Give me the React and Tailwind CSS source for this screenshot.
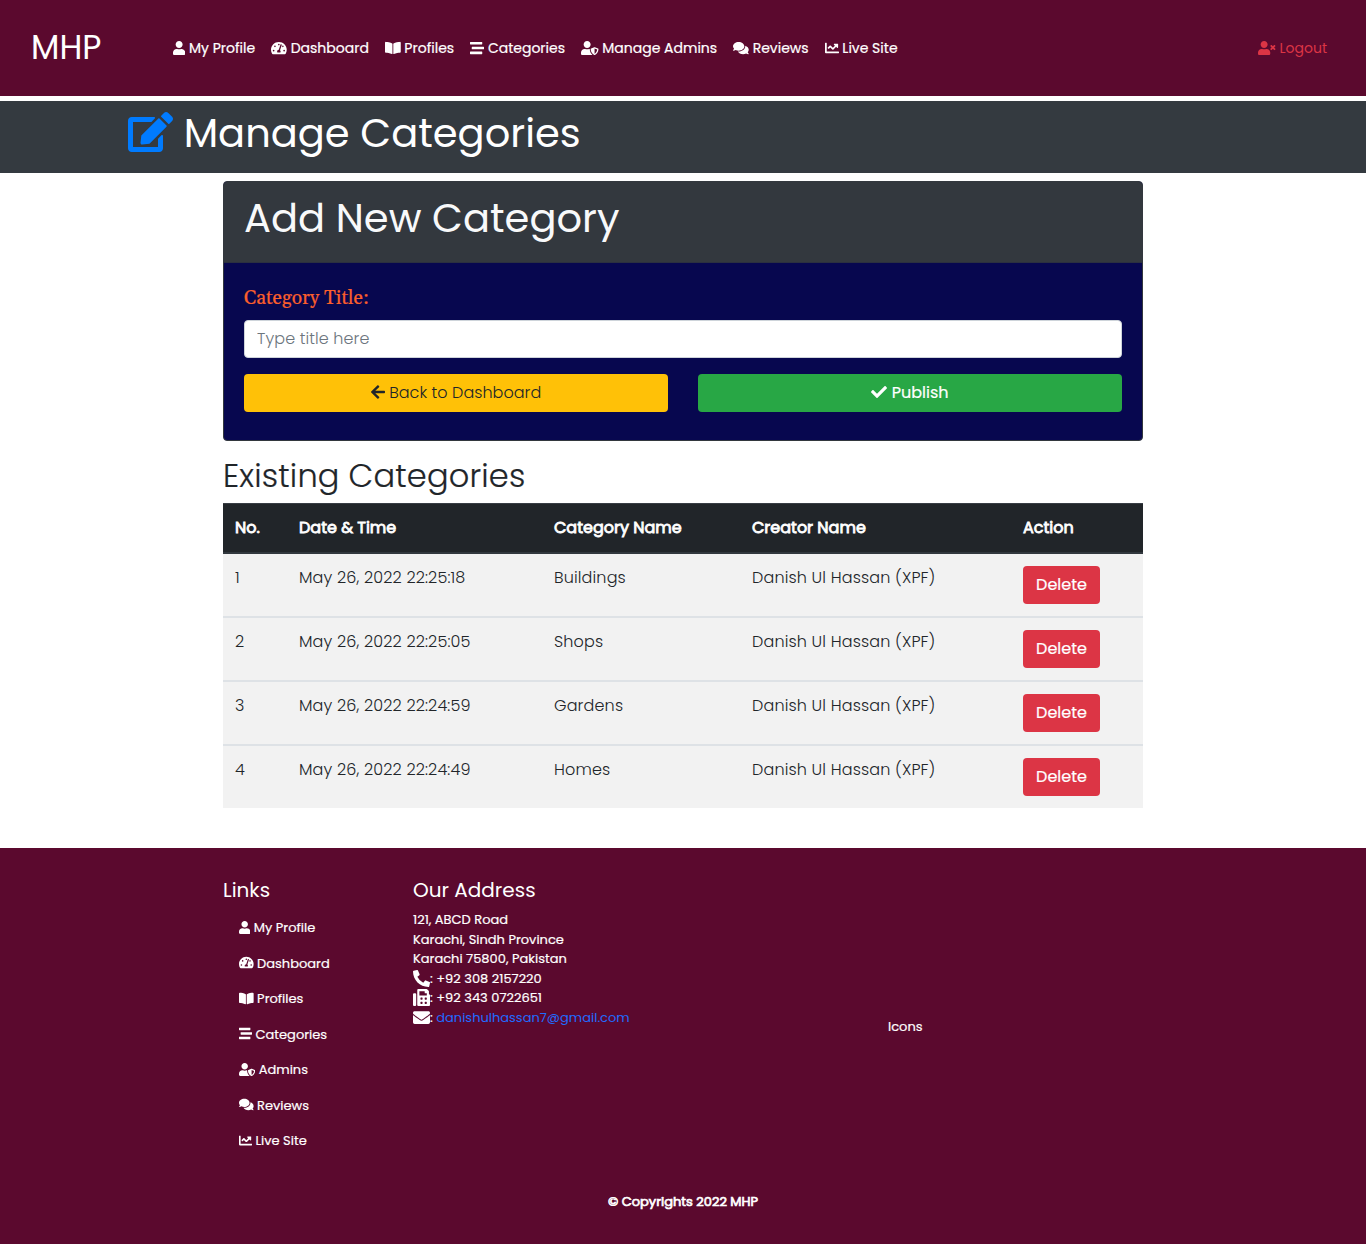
import { FaUser, FaTachometerAlt, FaBookOpen, FaStream, FaUserShield, FaComments, FaChartLine, FaUserTimes, FaEdit, FaArrowLeft, FaCheck, FaPhoneAlt, FaFax, FaEnvelope } from 'react-icons/fa';

const icon = 'inline-block h-[1em] align-[-0.125em]';

const links = [
  { label: 'My Profile', Icon: FaUser, width: 'w-[0.875em]' },
  { label: 'Dashboard', Icon: FaTachometerAlt, width: 'w-[1.125em]' },
  { label: 'Profiles', Icon: FaBookOpen, width: 'w-[1.125em]' },
  { label: 'Categories', Icon: FaStream, width: 'w-[1em]' },
  { label: 'Manage Admins', short: 'Admins', Icon: FaUserShield, width: 'w-[1.25em]' },
  { label: 'Reviews', Icon: FaComments, width: 'w-[1.125em]' },
  { label: 'Live Site', Icon: FaChartLine, width: 'w-[1em]' },
];

const rows = [
  ['1', 'May 26, 2022 22:25:18', 'Buildings', 'Danish Ul Hassan (XPF)'],
  ['2', 'May 26, 2022 22:25:05', 'Shops', 'Danish Ul Hassan (XPF)'],
  ['3', 'May 26, 2022 22:24:59', 'Gardens', 'Danish Ul Hassan (XPF)'],
  ['4', 'May 26, 2022 22:24:49', 'Homes', 'Danish Ul Hassan (XPF)'],
];

function Navbar() {
  return (
    <nav className="flex h-24 items-center bg-[#5b092e] pr-[39px] pl-[31px] text-sm text-white">
      <a className="w-[142px] text-[33px] leading-[48px]">MHP</a>
      <ul className="flex gap-4 [-webkit-text-stroke:0.2px_white]">
        {links.map(({ label, Icon, width }) => (
          <li key={label} className="whitespace-nowrap">
            <Icon className={`${icon} ${width}`} /> {label}
          </li>
        ))}
      </ul>
      <a className="ml-auto whitespace-nowrap text-[#dc3545]">
        <FaUserTimes className={`${icon} w-[1.25em]`} /> Logout
      </a>
    </nav>
  );
}

function CategoryForm() {
  return (
    <section className="overflow-hidden rounded border border-[#33383e] bg-[#07074f]">
      <header className="h-20 bg-[#33383e] px-5 pt-3 text-[#f8f9fa]">
        <h1 className="text-[40px] leading-[48px]">Add New Category</h1>
      </header>
      <div className="h-[178px] border-t border-[#2b3040] px-5 pt-[21px]">
        <label className="block h-[36px] font-['Gelasio','Source_Serif_4','Liberation_Serif',serif] text-[19.2px] leading-[30px] text-[#fb5f2c] [-webkit-text-stroke:0.2px]">Category Title:</label>
        <input
          className="block h-[38px] w-full rounded border border-[#ced4da] bg-white px-3 pb-[2px] text-base font-light tracking-[0.1px] placeholder:text-[#6c757d]"
          placeholder="Type title here"
        />
        <div className="mt-4 grid grid-cols-2 gap-[30px] text-base">
          <button className="h-[38px] rounded bg-[#ffc107] font-light tracking-[0.04px] text-[#212529]">
            <FaArrowLeft className={`${icon} w-[0.875em]`} /> Back to Dashboard
          </button>
          <button className="h-[38px] rounded bg-[#28a745] text-white [-webkit-text-stroke:0.2px_white]">
            <FaCheck className={`${icon} w-[1em]`} /> Publish
          </button>
        </div>
      </div>
    </section>
  );
}

function CategoryTable() {
  return (
    <table className="w-full table-fixed border-collapse text-base">
      <colgroup>
        <col className="w-16" />
        <col className="w-[255px]" />
        <col className="w-[198px]" />
        <col className="w-[271px]" />
        <col />
      </colgroup>
      <thead>
        <tr className="bg-[#212529] text-left text-white shadow-[inset_0_1px_0_#383d44,inset_0_-2px_0_#32383e]">
          {['No.', 'Date & Time', 'Category Name', 'Creator Name', 'Action'].map((h) => (
            <th key={h} className="px-3 pt-[13px] pb-[14px] leading-6 font-normal [-webkit-text-stroke:0.8px_white]">{h}</th>
          ))}
        </tr>
      </thead>
      <tbody>
        {rows.map((row, i) => (
          <tr key={row[0]} className={i < 3 ? 'h-16 bg-[#f2f2f2] shadow-[inset_0_-2px_0_#dee2e6]' : 'h-[62px] bg-[#f2f2f2]'}>
            {row.map((cell) => (
              <td key={cell} className="px-3 pt-3 align-top font-light tracking-[0.15px] text-[#212529]">{cell}</td>
            ))}
            <td className="px-3 pt-3 align-top">
              <button className="block h-[38px] w-[77px] rounded bg-[#dc3545] text-white [-webkit-text-stroke:0.2px_white]">Delete</button>
            </td>
          </tr>
        ))}
      </tbody>
    </table>
  );
}

function Footer() {
  return (
    <footer className="mt-10 h-[396px] bg-[#5b092e] text-[13px] text-white">
      <div className="mx-auto flex h-[344px] w-[920px] pt-[30px]">
        <div className="w-[190px]">
          <h5 className="text-xl leading-6">Links</h5>
          <ul className="mt-2 pl-4 [-webkit-text-stroke:0.2px_white]">
            {links.map(({ label, short, Icon, width }) => (
              <li key={label} className="h-[35.5px] pt-2 leading-[19.5px]">
                <Icon className={`${icon} ${width}`} /> {short || label}
              </li>
            ))}
          </ul>
        </div>
        <div className="w-[475px]">
          <h5 className="text-xl leading-6">Our Address</h5>
          <address className="mt-2 leading-[19.5px] not-italic [-webkit-text-stroke:0.2px]">
            <div>121, ABCD Road</div>
            <div>Karachi, Sindh Province</div>
            <div>Karachi 75800, Pakistan</div>
            <div className="flex h-[19.5px] items-center"><FaPhoneAlt className="size-[17px]" />: +92 308 2157220</div>
            <div className="flex h-[19.5px] items-center"><FaFax className="size-[17px]" />: +92 343 0722651</div>
            <div className="flex h-[19.5px] items-center"><FaEnvelope className="size-[17px]" />:&nbsp;<a className="text-[#1f6bff] [-webkit-text-stroke:0px]">danishulhassan7@gmail.com</a></div>
          </address>
        </div>
        <div className="pt-[139px] leading-[20px] [-webkit-text-stroke:0.2px_white]">Icons</div>
      </div>
      <p className="text-center leading-[20px] [-webkit-text-stroke:0.7px_white]">© Copyrights 2022 MHP</p>
    </footer>
  );
}

export default function App() {
  return (
    <div className="min-h-[1244px] bg-white font-['Poppins','Inter',sans-serif] text-[#212529]">
      <Navbar />
      <header className="mt-[5px] h-[72px] bg-[#343a40] pl-[128px] pt-2 text-white">
        <h1 className="text-[40px] leading-[48px]">
          <FaEdit className={`${icon} w-[1.125em] text-[#007bff]`} /> Manage Categories
        </h1>
      </header>
      <main className="mx-auto mt-2 w-[920px]">
        <CategoryForm />
        <h2 className="mt-4 mb-2 text-[32px] leading-[38px] font-light tracking-[0.2px] [-webkit-text-stroke:0.2px]">Existing Categories</h2>
        <CategoryTable />
      </main>
      <Footer />
    </div>
  );
}
